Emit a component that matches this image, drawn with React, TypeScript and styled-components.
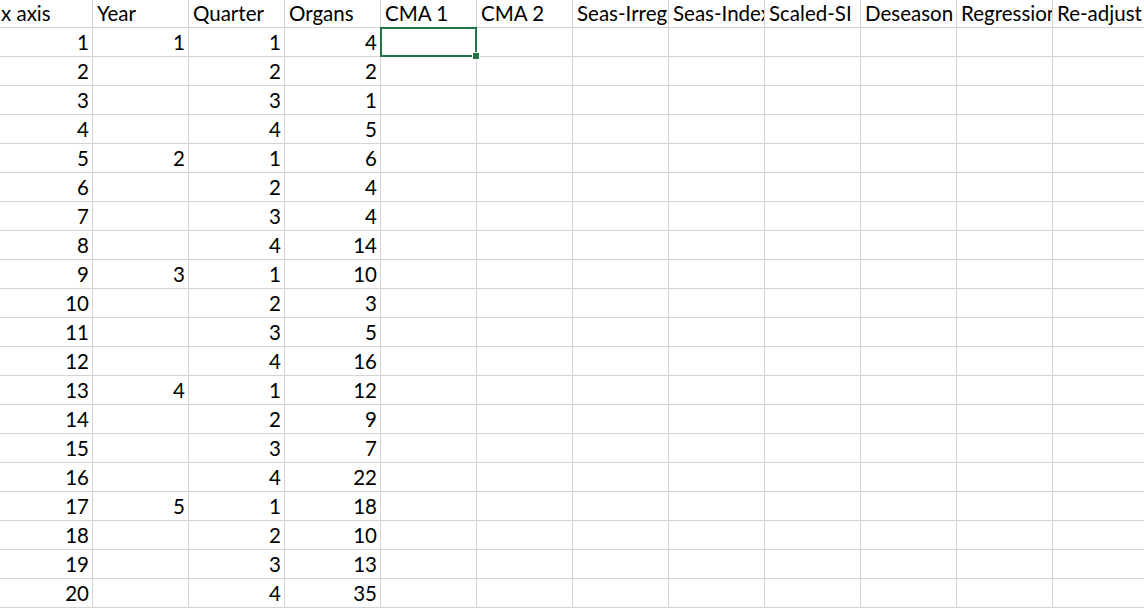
import React from "react";
import styled, { createGlobalStyle } from "styled-components";

const Global = createGlobalStyle`
  html, body { margin: 0; padding: 0; background: #ffffff; }
  body { overflow: hidden; }
`;

const Sheet = styled.div`
  display: grid;
  grid-template-columns: repeat(12, 96px);
  grid-auto-rows: 29px;
  grid-template-rows: 28px;
  margin-left: -3px;
  width: 1152px;
  font-family: Lato, "Open Sans", sans-serif;
  font-size: 20.5px;
  color: #000;
`;

const Cell = styled.div<{ $num?: boolean; $selected?: boolean }>`
  position: relative;
  box-sizing: border-box;
  border-right: 1px solid #d4d4d4;
  border-bottom: 1px solid #d4d4d4;
  display: flex;
  align-items: flex-end;
  justify-content: ${(p) => (p.$num ? "flex-end" : "flex-start")};
  padding: 0 3px 3px 4px;
  white-space: nowrap;
  overflow: hidden;
  line-height: 22px;
  ${(p) =>
    p.$selected &&
    `
    overflow: visible;
    z-index: 2;
    &::after {
      content: "";
      position: absolute;
      left: -1px; top: -1px; right: -1px; bottom: -1px;
      border: 2px solid #217346;
    }
    &::before {
      content: "";
      position: absolute;
      right: -4px; bottom: -4px;
      width: 6px; height: 6px;
      background: #217346;
      border: 1px solid #fff;
      z-index: 3;
    }
  `}
`;

const headers = [
  "x axis",
  "Year",
  "Quarter",
  "Organs",
  "CMA 1",
  "CMA 2",
  "Seas-Irreg",
  "Seas-Index",
  "Scaled-SI",
  "Deseason",
  "Regression",
  "Re-adjust",
];

const organs = [4, 2, 1, 5, 6, 4, 4, 14, 10, 3, 5, 16, 12, 9, 7, 22, 18, 10, 13, 35];

export default function App() {
  const rows = organs.map((o, i) => {
    const x = i + 1;
    const year = i % 4 === 0 ? String(i / 4 + 1) : "";
    const q = String((i % 4) + 1);
    return [String(x), year, q, String(o)];
  });
  return (
    <>
      <Global />
      <Sheet>
        {headers.map((h) => (
          <Cell key={h}>{h}</Cell>
        ))}
        {rows.map((r, ri) =>
          Array.from({ length: 12 }).map((_, ci) => (
            <Cell key={`${ri}-${ci}`} $num $selected={ri === 0 && ci === 4}>
              {r[ci] ?? ""}
            </Cell>
          ))
        )}
      </Sheet>
    </>
  );
}
